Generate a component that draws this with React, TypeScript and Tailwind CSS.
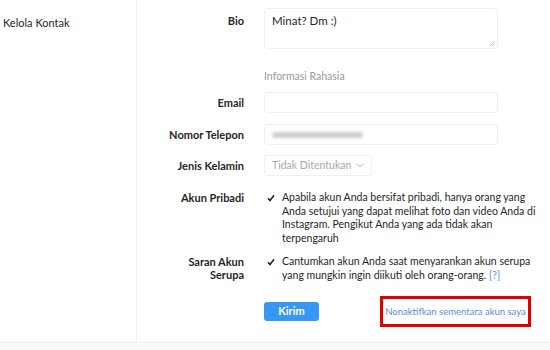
import React from "react";

const FONT = "font-['Lato','Noto_Sans',sans-serif]";

function Label({ children }: { children: React.ReactNode }) {
  return (
    <div className="w-[107px] shrink-0 text-right text-[11px] font-bold leading-[13.5px] text-[#262626]">
      {children}
    </div>
  );
}

function Check() {
  return (
    <svg width="8" height="8" viewBox="0 0 8 8" className="mt-[3px] shrink-0">
      <path d="M1 4.4 L3 6.6 L7 1.2" fill="none" stroke="#262626" strokeWidth="1.6" />
    </svg>
  );
}

export default function App() {
  return (
    <div className={`w-[550px] h-[350px] bg-[#fafafa] ${FONT}`}>
      <div className="flex h-[343px] bg-white border-b border-[#efefef]">
        {/* sidebar */}
        <div className="w-[137px] shrink-0 border-r border-[#efefef] pl-[3px] pt-[15px]">
          <div className="text-[11px] leading-[16px] text-[#262626]">Kelola Kontak</div>
        </div>

        {/* form */}
        <div className="flex flex-col pt-[8px]">
          {/* Bio */}
          <div className="flex gap-[20px]">
            <div className="pt-[6px]">
              <Label>Bio</Label>
            </div>
            <div className="relative w-[234px] h-[41px] border border-[#efefef] rounded-[3px] px-[7px] pt-[4px] text-[11.5px] leading-[16px] text-[#262626]">
              Minat? Dm :)
              <svg width="5" height="5" viewBox="0 0 5 5" className="absolute right-[2px] bottom-[2px]">
                <path d="M5 0 L0 5 M5 2.5 L2.5 5" stroke="#bbb" strokeWidth="0.8" />
              </svg>
            </div>
          </div>

          {/* Informasi Rahasia */}
          <div className="mt-[20px] pl-[127px] text-[10.5px] leading-[14px] text-[#999]">
            Informasi Rahasia
          </div>

          {/* Email */}
          <div className="mt-[9px] flex items-center gap-[20px]">
            <Label>Email</Label>
            <div className="w-[234px] h-[21px] border border-[#efefef] rounded-[3px]" />
          </div>

          {/* Nomor Telepon */}
          <div className="mt-[11px] flex items-center gap-[20px]">
            <Label>Nomor Telepon</Label>
            <div className="flex items-center w-[234px] h-[21px] border border-[#efefef] rounded-[3px] pl-[7px]">
              <div className="w-[91px] h-[6px] rounded-full bg-[#cfcfcf] blur-[1.5px]" />
            </div>
          </div>

          {/* Jenis Kelamin */}
          <div className="mt-[10px] flex items-center gap-[20px]">
            <Label>Jenis Kelamin</Label>
            <div className="flex items-center gap-[5px] h-[21px] border border-[#efefef] rounded-[3px] px-[7px] text-[10.5px] text-[#a8a8a8]">
              <span>Tidak Ditentukan</span>
              <svg width="8" height="5" viewBox="0 0 8 5">
                <path d="M0.5 0.5 L4 4 L7.5 0.5" fill="none" stroke="#b5b5b5" strokeWidth="1" />
              </svg>
            </div>
          </div>

          {/* Akun Pribadi */}
          <div className="mt-[15px] flex gap-[20px]">
            <Label>Akun Pribadi</Label>
            <div className="flex gap-[7px] pl-[3px] text-[10.5px] leading-[13.7px] text-[#262626] whitespace-nowrap">
              <Check />
              <div>
                Apabila akun Anda bersifat pribadi, hanya orang yang
                <br />
                Anda setujui yang dapat melihat foto dan video Anda di
                <br />
                Instagram. Pengikut Anda yang ada tidak akan
                <br />
                terpengaruh
              </div>
            </div>
          </div>

          {/* Saran Akun Serupa */}
          <div className="mt-[9px] flex gap-[20px]">
            <Label>
              Saran Akun
              <br />
              Serupa
            </Label>
            <div className="flex gap-[7px] pl-[3px] text-[10.5px] leading-[13.7px] text-[#262626] whitespace-nowrap">
              <Check />
              <div>
                Cantumkan akun Anda saat menyarankan akun serupa
                <br />
                yang mungkin ingin diikuti oleh orang-orang.{" "}
                <span className="text-[#5b8fd6]">[?]</span>
              </div>
            </div>
          </div>

          {/* actions */}
          <div className="mt-[14px] flex items-center">
            <div className="ml-[127px] flex items-center justify-center w-[55px] h-[19px] rounded-[3px] bg-[#3897f0] text-[11px] font-bold text-white">
              Kirim
            </div>
            <div className="ml-[61px] flex items-center justify-center w-[151px] h-[31px] border-[3px] border-[#e00000] whitespace-nowrap text-[9.5px] text-[#5b8fd6]">
              Nonaktifkan sementara akun saya
            </div>
          </div>
        </div>
      </div>
    </div>
  );
}
